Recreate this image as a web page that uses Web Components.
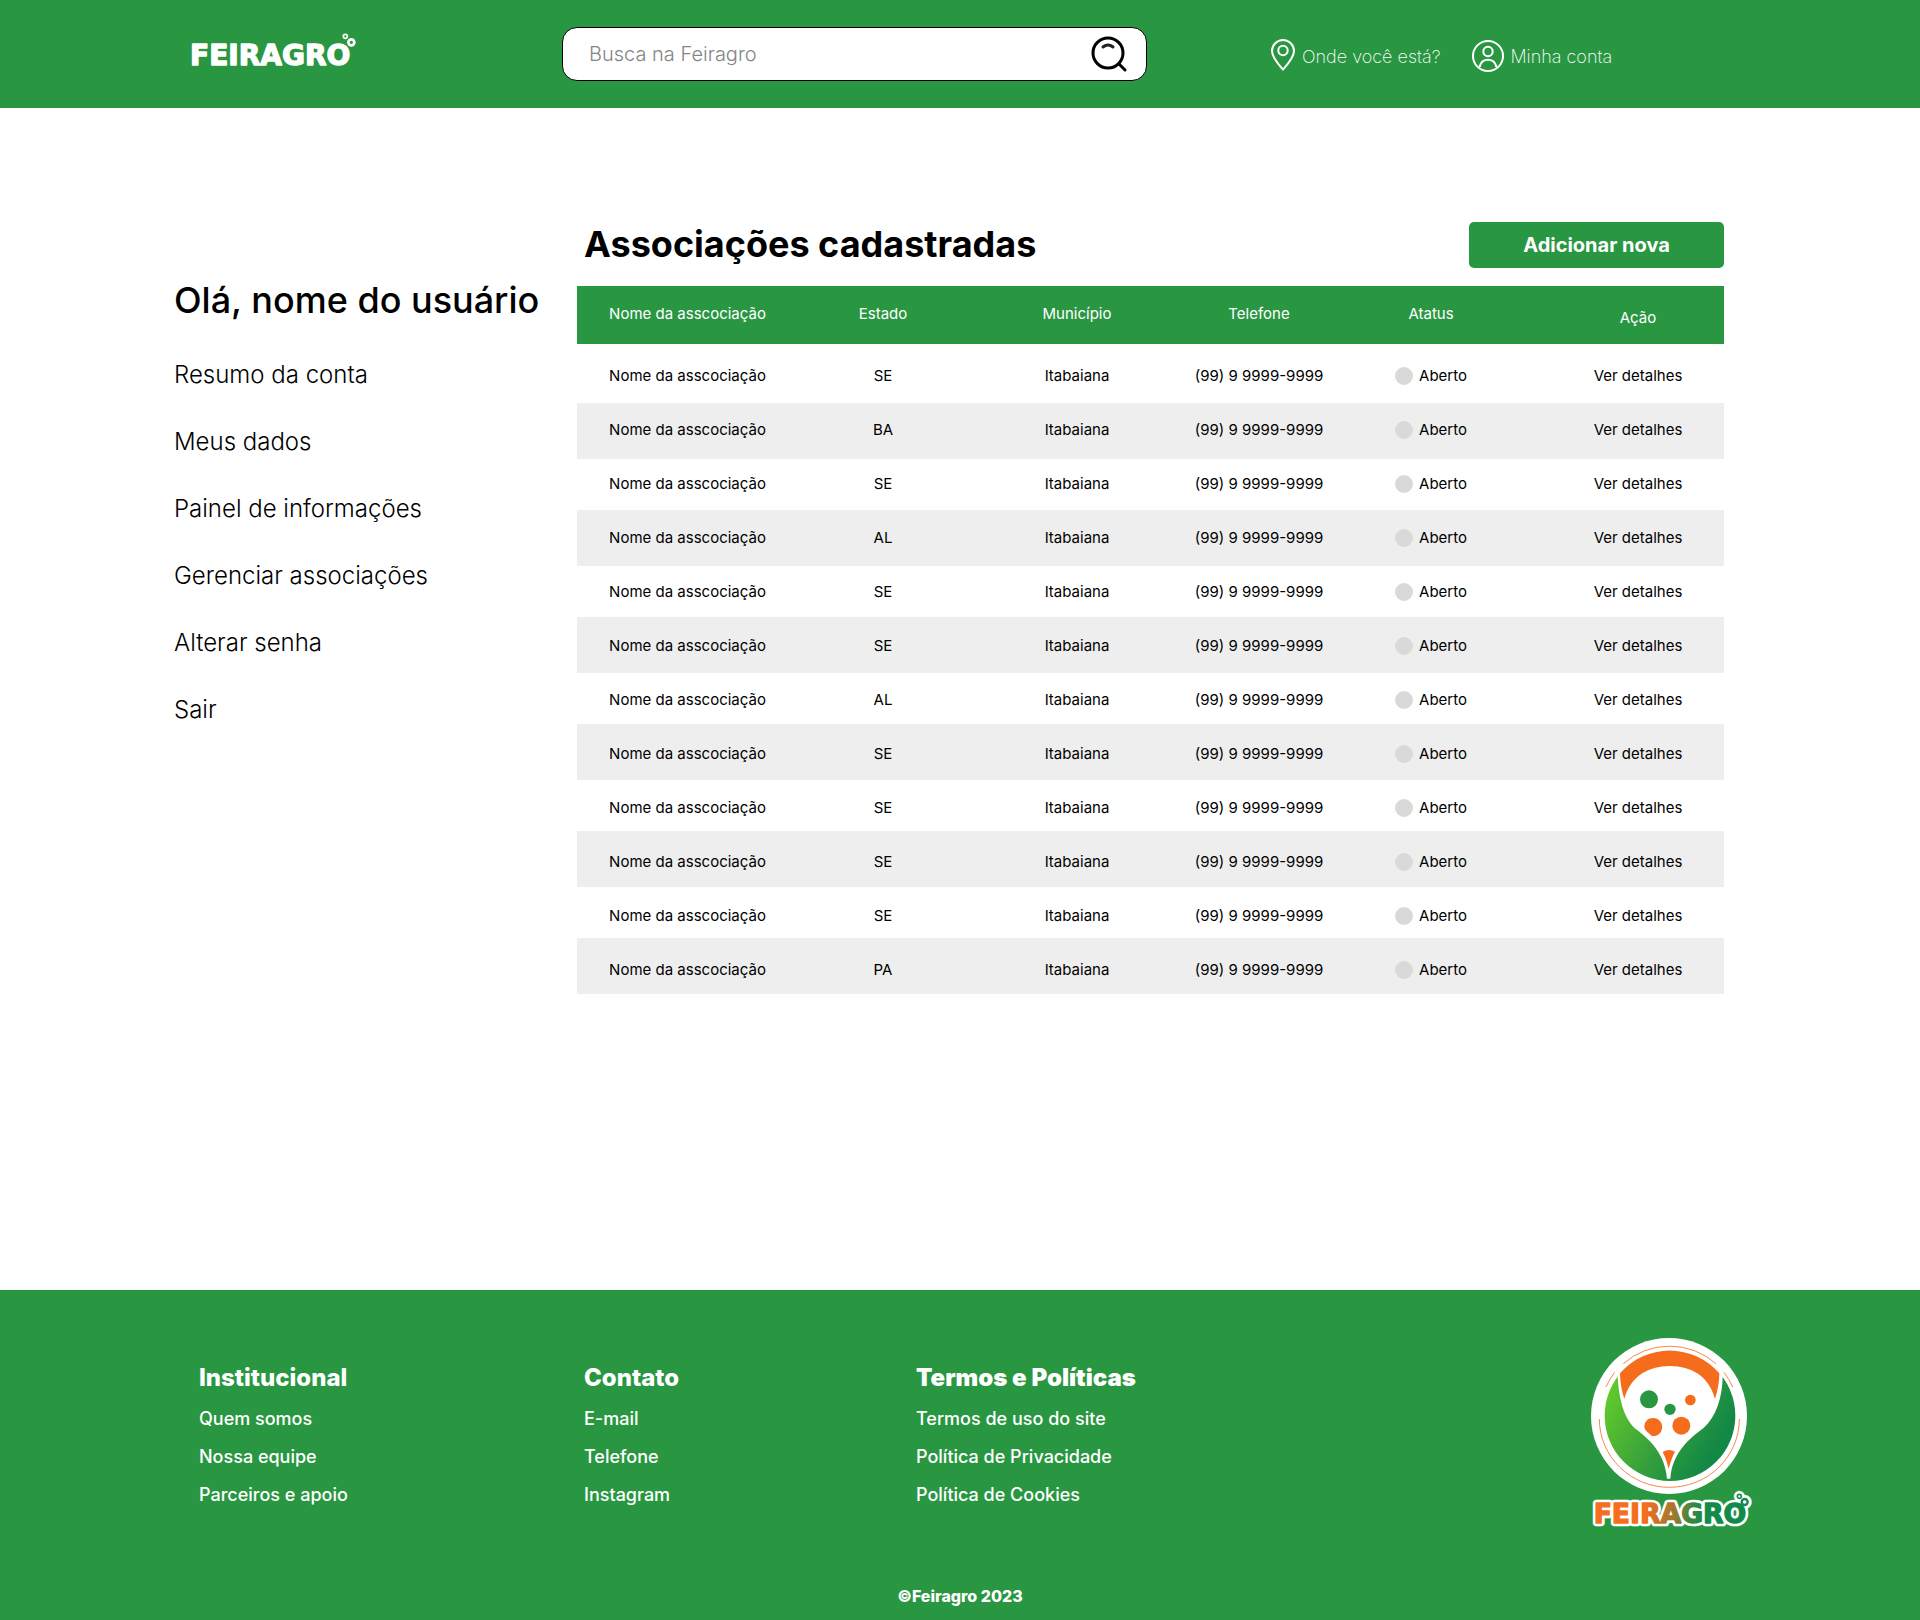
<!DOCTYPE html>
<html lang="pt-BR">
<head>
<meta charset="utf-8">
<meta name="viewport" content="width=device-width, initial-scale=1">
<title>Feiragro - Associações cadastradas</title>
<style>
  body { margin: 0; background: #fff; color: #000; font-family: Inter, "Liberation Sans", sans-serif; --green: #299742; }
  feiragro-app { display: block; }
</style>
</head>
<body>
<feiragro-app></feiragro-app>

<template id="app-template">
  <style>
    :host { display: block; }
    main { display: flex; align-items: flex-start; padding: 114px 196px 293px 174px; }
    account-menu { flex: 0 0 403px; }
    association-list { flex: 1; min-width: 0; }
  </style>
  <site-header></site-header>
  <main>
    <account-menu>Olá, nome do usuário</account-menu>
    <association-list></association-list>
  </main>
  <site-footer></site-footer>
</template>

<template id="header-template">
  <style>
    :host { display: block; background: var(--green); color: #fff; }
    header { display: flex; align-items: center; height: 108px; padding: 0 192px 0 190px; box-sizing: border-box; }
    .brand { flex: 0 0 372px; }
    .brand svg { display: block; margin-bottom: 8px; overflow: visible; }
    form { flex: 0 1 585px; display: flex; align-items: center; box-sizing: border-box; height: 54px; padding: 0 17px 0 26px; background: #fff; border: 1px solid #000; border-radius: 15px; }
    input { flex: 1; min-width: 0; border: 0; outline: 0; padding: 0; background: none; font: 300 20px/24px Inter, "Liberation Sans", sans-serif; color: #000; }
    input::placeholder { color: #858585; opacity: 1; }
    button { padding: 0; border: 0; background: none; display: flex; }
    nav { display: flex; gap: 31px; margin-left: 122px; padding-top: 2px; }
    a { display: flex; align-items: center; gap: 5px; color: inherit; text-decoration: none; font-size: 18px; line-height: 24px; font-weight: 200; white-space: nowrap; }
    a span { padding-top: 4px; }
  </style>
  <header>
    <a class="brand" href="#" aria-label="Feiragro">
      <svg width="170" height="34" viewBox="60 39 510 102" fill="#fff">
        <text x="60" y="136" font-family="DejaVu Sans" font-weight="700" font-size="84" stroke="#fff" stroke-width="4" stroke-linejoin="round">FEIRAGRO</text>
        <g fill="#299742" stroke="#fff"><circle cx="526" cy="49" r="6" stroke-width="5"/><circle cx="544" cy="67" r="9" stroke-width="8"/></g>
      </svg>
    </a>
    <form role="search">
      <input type="search" aria-label="Busca na Feiragro" placeholder="Busca na Feiragro">
      <button type="button" aria-label="Buscar">
        <svg width="38" height="38" viewBox="0 0 38 38" fill="none" stroke="#000" stroke-width="3" stroke-linecap="round">
          <circle cx="17" cy="18" r="15"/><path d="M28 29l6 6"/><path d="M12 12q5-4 10 0" stroke="#222"/>
        </svg>
      </button>
    </form>
    <nav aria-label="Conta">
      <a href="#">
        <svg width="28" height="34" viewBox="0 0 28 34" fill="none" stroke="#fff" stroke-width="2"><path d="M14 31.500C10 27 3 19.500 3 13a11 11 0 0 1 22 0C25 19.500 18 27 14 31.500z" stroke-linejoin="round"/><circle cx="14" cy="12.500" r="4.700"/></svg>
        <span>Onde você está?</span>
      </a>
      <a href="#">
        <svg width="34" height="34" viewBox="0 0 34 34" fill="none" stroke="#fff" stroke-width="2"><circle cx="17" cy="18" r="15"/><circle cx="17" cy="13.500" r="4.700"/><path d="M9 29v-1.500a8.500 8.500 0 0 1 16 0V29"/></svg>
        <span>Minha conta</span>
      </a>
    </nav>
  </header>
</template>

<template id="menu-template">
  <style>
    :host { display: block; padding-top: 56px; }
    h2 { margin: 0 0 38px; font-size: 36px; line-height: 44px; font-weight: 500; white-space: nowrap; }
    ul { list-style: none; margin: 0; padding: 0; display: grid; gap: 38px; }
    li { display: flex; }
    a { color: inherit; text-decoration: none; font-size: 24px; line-height: 29px; font-weight: 300; }
  </style>
  <h2><slot></slot></h2>
  <nav aria-label="Menu da conta"><ul>
    <li><a href="#">Resumo da conta</a></li>
    <li><a href="#">Meus dados</a></li>
    <li><a href="#">Painel de informações</a></li>
    <li><a href="#">Gerenciar associações</a></li>
    <li><a href="#">Alterar senha</a></li>
    <li><a href="#">Sair</a></li>
  </ul></nav>
</template>

<template id="list-template">
  <style>
    :host { display: block; }
    .bar { display: flex; justify-content: space-between; align-items: center; margin-bottom: 18px; padding-left: 7px; }
    h1 { margin: 0; font-size: 36px; line-height: 44px; font-weight: 700; padding-bottom: 2px; }
    button { width: 255px; height: 46px; border: 0; border-radius: 5px; background: var(--green); color: #fff; font: 700 20px/24px Inter, "Liberation Sans", sans-serif; }
    table { width: 100%; table-layout: fixed; border-spacing: 0; font-size: 15px; line-height: 20px; text-align: center;
      background: repeating-linear-gradient(#eee 0 56px, #fff 56px 107px) 0 10px; }
    th, td { padding: 0; }
    th { background: var(--green); color: #fff; font-weight: 400; padding: 18px 0 20px; }
    th:last-child { padding: 22px 0 16px; }
    td { height: 54px; }
    tbody tr:first-child td { background: #fff; padding-top: 5px; }
    th:nth-child(5), td:nth-child(5) { padding-right: 22px; }
    a { color: inherit; text-decoration: none; }
  </style>
  <div class="bar"><h1>Associações cadastradas</h1><button type="button">Adicionar nova</button></div>
  <table>
    <colgroup><col style="width:221px"><col style="width:170px"><col style="width:218px"><col style="width:146px"><col style="width:220px"><col style="width:172px"></colgroup>
    <thead><tr><th scope="col">Nome da asscociação</th><th scope="col">Estado</th><th scope="col">Município</th><th scope="col">Telefone</th><th scope="col">Atatus</th><th scope="col">Ação</th></tr></thead>
    <tbody></tbody>
  </table>
</template>

<template id="status-template">
  <style>
    :host { display: inline-flex; align-items: center; gap: 6px; vertical-align: middle; }
    i { width: 18px; height: 18px; border-radius: 50%; background: #d9d9d9; }
  </style>
  <i></i><slot></slot>
</template>

<template id="footer-template">
  <style>
    :host { display: block; background: var(--green); color: #fff; }
    footer { padding: 45px 0 14px; }
    .top { display: flex; align-items: flex-start; padding: 0 167px 0 199px; }
    footer-column { margin-top: 28px; flex: 0 0 332px; }
    footer-column:first-child { flex-basis: 385px; }
    .emblem { display: block; margin-left: auto; flex: none; overflow: visible; }
    p { margin: 56px 0 0; font-size: 16px; line-height: 20px; font-weight: 800; text-align: center; }
  </style>
  <footer>
    <div class="top">
      <footer-column heading="Institucional"><a href="#">Quem somos</a><a href="#">Nossa equipe</a><a href="#">Parceiros e apoio</a></footer-column>
      <footer-column heading="Contato"><a href="#">E-mail</a><a href="#">Telefone</a><a href="#">Instagram</a></footer-column>
      <footer-column class="strong" heading="Termos e Políticas"><a href="#">Termos de uso do site</a><a href="#">Política de Privacidade</a><a href="#">Política de Cookies</a></footer-column>
      <svg class="emblem" width="163" height="195" viewBox="60 45 489 585" role="img" aria-label="Feiragro">
        <defs>
          <linearGradient id="leaf" gradientUnits="userSpaceOnUse" x1="110" y1="220" x2="430" y2="400"><stop offset="0" stop-color="#62ca2a"/><stop offset=".55" stop-color="#37a03c"/><stop offset="1" stop-color="#128846"/></linearGradient>
          <linearGradient id="word" gradientUnits="userSpaceOnUse" x1="225" y1="560" x2="400" y2="600"><stop offset="0" stop-color="#f56e1e"/><stop offset=".5" stop-color="#a0782f"/><stop offset=".8" stop-color="#35883f"/><stop offset="1" stop-color="#128a49"/></linearGradient>
        </defs>
        <circle cx="297" cy="288" r="234" fill="#fff"/>
        <circle cx="300" cy="287" r="196" fill="url(#leaf)"/>
        <path fill="#fff" d="M143 168C146 230 158 288 193 324C232 352 286 398 291 476H301C306 398 362 352 400 325C440 288 457 230 458 170V150A200 200 0 0 0 143 150z"/>
        <g fill="#f56c1c">
          <path d="M150 160A197 197 0 0 1 448 160C448 190 442 215 435 237C418 170 365 138 299 138C235 138 180 170 163 237C156 215 150 190 150 160z"/>
          <circle cx="361" cy="240" r="16"/><path d="M223 322C223 304 234 294 250 294a26 27 0 1 1-6 53C240 341 224 333 223 322z"/><circle cx="334" cy="317" r="27"/>
          <path d="M278 396Q297 385 315 395C306 412 300 430 296 447C292 430 286 412 278 396z"/>
        </g>
        <g fill="#299742"><circle cx="237" cy="238" r="27"/><circle cx="300" cy="268" r="17"/></g>
        <g fill="none" stroke="#f28a50" stroke-width="3"><path d="M160 131A210 210 0 0 1 438 131M108 201Q118 178 134 157M462 157Q478 178 488 201M88 297A210 205 0 0 0 508 297"/></g>
        <g fill="#fff" stroke="#fff"><circle cx="508" cy="529" r="16"/><circle cx="524" cy="546" r="21"/>
        <text x="71" y="610" font-family="DejaVu Sans" font-weight="700" font-size="80" stroke-width="20" stroke-linejoin="round">FEIRAGRO</text></g>
        <text x="71" y="610" font-family="DejaVu Sans" font-weight="700" font-size="80" fill="url(#word)" stroke="url(#word)" stroke-width="4" stroke-linejoin="round" aria-hidden="true">FEIRAGRO</text>
        <g fill="#fff" stroke="#128a49"><circle cx="508" cy="529" r="6" stroke-width="5"/><circle cx="524" cy="546" r="9" stroke-width="7"/></g>
      </svg>
    </div>
    <p>©Feiragro 2023</p>
  </footer>
</template>

<template id="column-template">
  <style>
    :host { display: block; }
    h3 { margin: 0 0 7px; font-size: 24px; line-height: 30px; font-weight: 800; }
    :host(.strong) h3 { font-weight: 900; }
    div { display: flex; flex-direction: column; align-items: flex-start; }
    ::slotted(a) { color: inherit; text-decoration: none; font-size: 18px; line-height: 38px; font-weight: 500; }
  </style>
  <h3></h3>
  <div><slot></slot></div>
</template>

<script>
  class TemplateElement extends HTMLElement {
    constructor() {
      super();
      this.attachShadow({ mode: "open" }).append(
        document.getElementById(this.constructor.template).content.cloneNode(true));
    }
  }
  customElements.define("status-badge", class extends TemplateElement { static template = "status-template"; });
  customElements.define("footer-column", class extends TemplateElement {
    static template = "column-template";
    connectedCallback() { this.shadowRoot.querySelector("h3").textContent = this.getAttribute("heading"); }
  });
  customElements.define("account-menu", class extends TemplateElement { static template = "menu-template"; });
  customElements.define("association-list", class extends TemplateElement {
    static template = "list-template";
    connectedCallback() {
      const states = ["SE", "BA", "SE", "AL", "SE", "SE", "AL", "SE", "SE", "SE", "SE", "PA"];
      this.shadowRoot.querySelector("tbody").innerHTML = states.map(state =>
        `<tr><td>Nome da asscociação</td><td>${state}</td><td>Itabaiana</td><td>(99) 9 9999-9999</td><td><status-badge>Aberto</status-badge></td><td><a href="#">Ver detalhes</a></td></tr>`).join("");
    }
  });
  customElements.define("site-header", class extends TemplateElement { static template = "header-template"; });
  customElements.define("site-footer", class extends TemplateElement { static template = "footer-template"; });
  customElements.define("feiragro-app", class extends TemplateElement { static template = "app-template"; });
</script>
</body>
</html>
